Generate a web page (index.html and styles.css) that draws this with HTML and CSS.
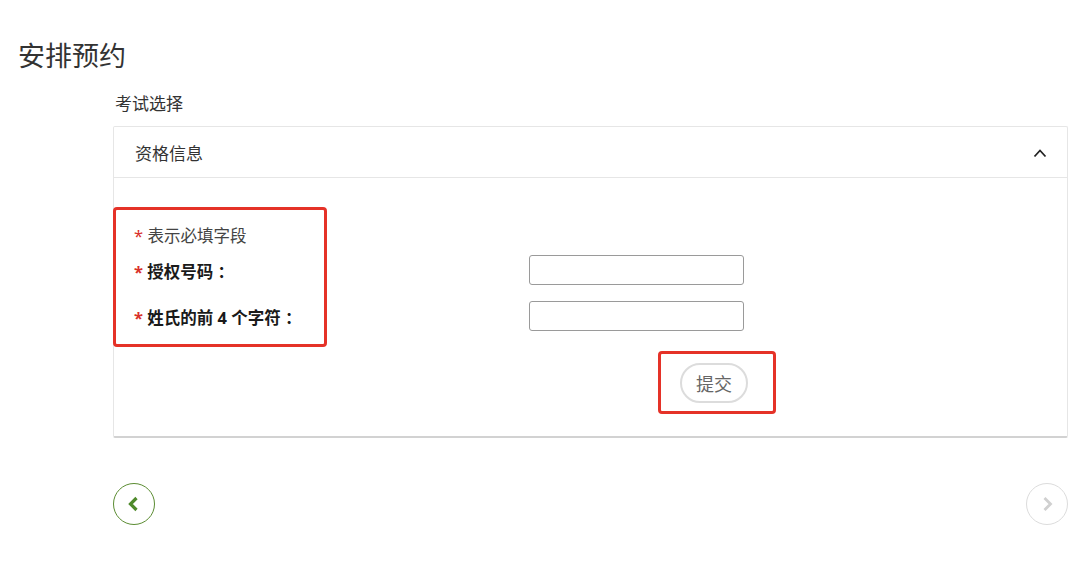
FILE: index.html
```html
<!DOCTYPE html>
<html lang="zh-CN">
<head>
  <meta charset="UTF-8">
  <title>安排预约</title>
  <link rel="stylesheet" href="styles.css">
</head>
<body>
  <h1 class="page-title">安排预约</h1>
  <div class="content">
    <p class="step-name">考试选择</p>

    <div class="panel">
      <div class="panel-head">
        <span>资格信息</span>
        <svg class="chevron" width="14" height="10" viewBox="0 0 14 10">
          <path d="M1.5 8.5 L7 2.5 L12.5 8.5" fill="none" stroke="#222" stroke-width="1.8"/>
        </svg>
      </div>
      <div class="panel-body">
        <div class="form-row">
          <div class="labels mark">
            <p class="hint"><span class="req">*</span> 表示必填字段</p>
            <p class="label"><span class="req">*</span> 授权号码 ：</p>
            <p class="label"><span class="req">*</span> 姓氏的前 4 个字符 ：</p>
          </div>
          <div class="fields">
            <input type="text" class="field">
            <input type="text" class="field">
          </div>
        </div>
        <div class="submit-wrap mark">
          <button class="submit">提交</button>
        </div>
      </div>
    </div>

    <div class="pager">
      <button class="nav-btn prev">
        <svg width="18" height="18" viewBox="0 0 18 18">
          <path d="M11.5 3 L5.5 9 L11.5 15" fill="none" stroke="#4f8a2b" stroke-width="3.2"/>
        </svg>
      </button>
      <button class="nav-btn next">
        <svg width="18" height="18" viewBox="0 0 18 18">
          <path d="M6.5 3 L12.5 9 L6.5 15" fill="none" stroke="#d0d0d0" stroke-width="2.8"/>
        </svg>
      </button>
    </div>
  </div>
</body>
</html>
```

FILE: styles.css
```css
body {
  font-family: "Noto Sans", "Noto Sans CJK SC", sans-serif;
  background-color: #fff;
  color: #333;
  margin: 0;
  padding: 0;
}

p {
  margin: 0;
}

.page-title {
  margin: 0;
  padding: 38px 0 0 18px;
  font-size: 27px;
  font-weight: normal;
  line-height: 36px;
  color: #333;
}

.content {
  margin-left: 113px;
  width: 955px;
}

.step-name {
  margin-top: 18px;
  padding-left: 2px;
  font-size: 17px;
  line-height: 24px;
  color: #333;
}

.panel {
  margin-top: 10px;
  border: 1px solid #e6e6e6;
  border-bottom: 2px solid #d2d2d2;
  border-radius: 2px;
}

.panel-head {
  display: flex;
  justify-content: space-between;
  align-items: center;
  height: 50px;
  padding: 0 20px 0 21px;
  border-bottom: 1px solid #e6e6e6;
  font-size: 17px;
  color: #333;
}

.chevron {
  margin-top: 2px;
}

.panel-body {
  padding: 29px 0 22px 0;
}

.form-row {
  display: flex;
}

/* 红色标注框 */
.mark {
  border: 3px solid #e53228;
  border-radius: 4px;
}

.labels {
  width: 214px;
  height: 140px;
  margin-left: -1px;
  padding: 14px 0 0 18px;
  box-sizing: border-box;
}

.hint {
  font-size: 16.5px;
  line-height: 24px;
  color: #444;
}

.label {
  font-size: 16.5px;
  font-weight: bold;
  line-height: 24px;
  color: #1a1a1a;
  margin-top: 12px;
}

.label + .label {
  margin-top: 22px;
}

.req {
  color: #d9302a;
  font-weight: normal;
}

.label .req {
  font-weight: bold;
}

.fields {
  display: flex;
  flex-direction: column;
  gap: 16px;
  margin-left: 202px;
  padding-top: 48px;
}

.field {
  width: 215px;
  height: 30px;
  box-sizing: border-box;
  border: 1px solid #9a9a9a;
  border-radius: 3px;
  padding: 0 6px;
}

.submit-wrap {
  width: 118px;
  height: 63px;
  box-sizing: border-box;
  margin: 4px 0 0 544px;
  display: flex;
  align-items: center;
  padding-left: 19px;
}

.submit {
  width: 68px;
  height: 40px;
  border: 2px solid #dcdcdc;
  border-radius: 20px;
  background: #fff;
  color: #666;
  font-family: "Noto Sans CJK SC", sans-serif;
  font-size: 18px;
  padding: 0;
  cursor: pointer;
}

.pager {
  display: flex;
  justify-content: space-between;
  margin-top: 45px;
}

.nav-btn {
  width: 42px;
  height: 42px;
  border-radius: 50%;
  background: #fff;
  display: flex;
  align-items: center;
  justify-content: center;
  padding: 0;
  cursor: pointer;
}

.prev {
  border: 1.5px solid #5b8c32;
}

.next {
  border: 1.5px solid #dcdcdc;
}
```
